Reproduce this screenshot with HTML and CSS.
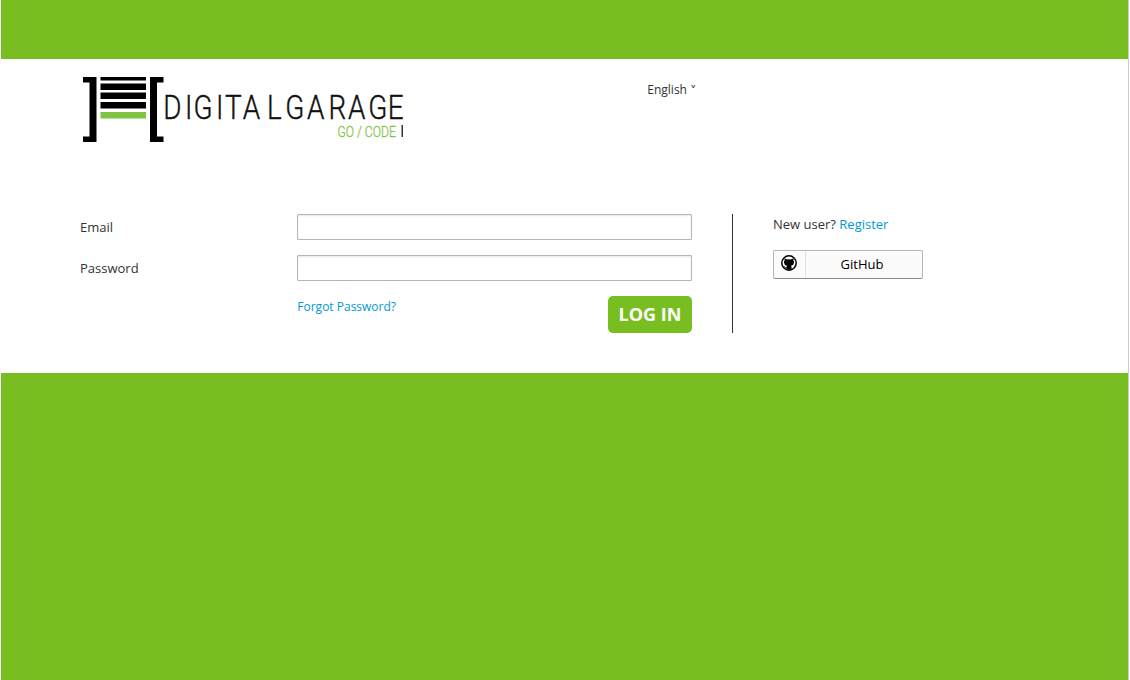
FILE: index.html
```html
<!DOCTYPE html>
<html lang="en">
<head>
<meta charset="utf-8">
<title>Log in</title>
<link rel="stylesheet" href="styles.css">
</head>
<body>
<div class="page">
  <main class="card">
    <header class="header">
      <svg class="logo" width="330" height="76" viewBox="80 70 330 76" role="img" aria-label="Digital Garage">
        <path d="M83 77h13.500v65H83v-5.500h6.500v-54H83zM163.500 77H150v65h13.500v-5.500H157v-54h6.500z"/>
        <path d="M100.500 77H146v3.500h-45.500zM100.500 83.500H146V90h-45.500zM100.500 92.500H146V99h-45.500zM100.500 102H146v6.500h-45.500z"/>
        <path class="logo-door" d="M100.500 112H146v6.500h-45.500z"/>
        <g class="logo-name" transform="translate(0 119) scale(.82 1)">
          <text y="0" x="199 225.500 236 263.500 274.500 296 325.500 348 374.500 400.500 424.500 449 473">DIGITALGARAGE</text>
        </g>
        <g class="logo-tag" transform="translate(337.500 136.500) scale(.8 1)">
          <text textLength="73" lengthAdjust="spacingAndGlyphs">GO / CODE</text>
        </g>
        <path class="logo-cursor" d="M401.500 125h1.500v12h-1.500z"/>
      </svg>
      <a class="locale">English <span class="caret">˅</span></a>
    </header>
    <div class="content">
      <form class="form">
        <label class="label" for="email">Email</label>
        <input class="input" id="email" type="text">
        <label class="label" for="password">Password</label>
        <input class="input" id="password" type="password">
        <div class="actions">
          <a class="link forgot">Forgot Password?</a>
          <button class="submit" type="button">LOG IN</button>
        </div>
      </form>
      <aside class="aside">
        <div>New user? <a class="link">Register</a></div>
        <a class="social">
          <span class="social-icon">
            <svg width="16" height="16" viewBox="0 0 16 16"><circle cx="8" cy="8" r="7.200" fill="#fff" stroke="#000" stroke-width="1.500"/><path d="M3.700 3.500q1.200 0 2.300.9 2-.5 4 0 1.100-.9 2.300-.9.400 1 .1 2 .8 1 .6 2.300-.2 2.600-3 3 .6.600.6 1.500v2.500H5.400v-1.500q-1.400.2-2-1.200l-.6-.7q1.100-.2 1.700.8.400.5 1 .2 0-1 .5-1.600-2.800-.4-3-3Q2.800 6.500 3.600 5.500q-.3-1 .1-2z"/></svg>
          </span>
          <span class="social-text">GitHub</span>
        </a>
      </aside>
    </div>
  </main>
</div>
</body>
</html>
```
FILE: styles.css
```css
* { box-sizing: border-box; }
body {
  margin: 0;
  background: #fff;
  color: #333;
  font: 13px/18px "Open Sans", "Noto Sans", sans-serif;
}
.page {
  height: 680px;
  margin: 0 2px 0 1px;
  padding-top: 59px;
  background: #78be20;
  box-shadow: 1px 0 #ccc;
}
.card { height: 314px; padding: 11px 78px 0 79px; background: #fff; }
.header { display: flex; align-items: flex-start; height: 144px; }
.logo { flex: none; display: block; }
.logo-door { fill: #80c342; }
.logo-name { font: 300 34px Roboto, sans-serif; fill: #111; stroke: #111; stroke-width: .4px; }
.logo-tag { font: 300 15.5px Roboto, sans-serif; fill: #80c342; stroke: #80c342; stroke-width: .3px; }
.logo-cursor { fill: #333; }
.locale { margin: 11px 0 0 237.3px; font-size: 12px; }
.caret { font-family: "DejaVu Sans", sans-serif; font-size: 13px; line-height: 1; vertical-align: -1px; }
.content { display: flex; }
.form {
  display: grid;
  grid-template-columns: 217px 395px;
  grid-template-rows: 26px 26px 37px;
  row-gap: 15px;
  width: 612px;
}
.label { padding-top: 4px; }
.input {
  width: 395px;
  height: 26px;
  border: 1px solid #b6b6b6;
  border-radius: 1px;
  background: #fff;
  box-shadow: inset 0 1px 2px rgba(0, 0, 0, .1);
}
.actions { grid-column: 2; display: flex; justify-content: space-between; }
.link { color: #0099d3; }
.forgot { padding: 2px 0 0 .3px; font-size: 12px; }
.submit {
  width: 84px;
  height: 37px;
  padding: 0 0 2px;
  border: 0;
  border-radius: 5px;
  background: #78be20;
  color: #fff;
  font: bold 18px "Open Sans", sans-serif;
}
.aside { height: 119px; margin-left: 40px; padding: 1px 0 0 40px; border-left: 1px solid #333; }
.social {
  display: flex;
  width: 150px;
  height: 29px;
  margin-top: 17px;
  border: 1px solid #b6b6b6;
  border-bottom-color: #888;
  border-radius: 2px;
  background: #fbfbfb;
  color: #000;
}
.social-icon { width: 32px; margin: 1px 0; padding: 3px 0 0 7px; border-right: 1px solid #ddd; }
.social-icon svg { display: block; }
.social-text { flex: 1; padding-top: 4px; padding-right: 4px; text-align: center; }
```
